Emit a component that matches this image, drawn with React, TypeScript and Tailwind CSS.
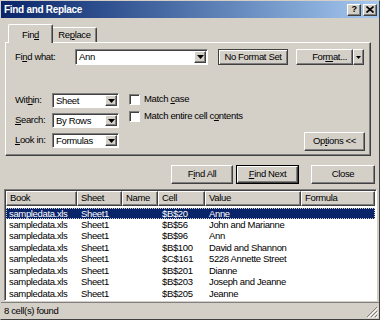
import React from 'react';

const raised =
  'border border-t-white border-l-white border-r-[#404040] border-b-[#404040] shadow-[inset_-1px_-1px_0_#808080]';
const sunken =
  'border border-t-[#808080] border-l-[#808080] border-r-white border-b-white shadow-[inset_1px_1px_0_#404040]';

function Arrow() {
  return (
    <svg width="7" height="4" viewBox="0 0 7 4">
      <path d="M0 0h7L3.5 4z" fill="#000" />
    </svg>
  );
}

function DropButton() {
  return (
    <div className={`w-[12px] h-full flex items-center justify-center bg-[#d4d0c8] ${raised}`}>
      <Arrow />
    </div>
  );
}

function Select({ value, width }: { value: string; width: string }) {
  return (
    <div className={`${width} h-[15px] bg-white flex items-stretch ${sunken} p-[1px]`}>
      <span className="flex-1 pl-[2px] leading-[11px]">{value}</span>
      <DropButton />
    </div>
  );
}

function Checkbox({ children }: { children: React.ReactNode }) {
  return (
    <div className="flex items-center h-[13px]">
      <div className={`w-[11px] h-[11px] bg-white ${sunken}`} />
      <span className="ml-[4px]">{children}</span>
    </div>
  );
}

const columns = [
  { name: 'Book', w: 'w-[71px]' },
  { name: 'Sheet', w: 'w-[45px]' },
  { name: 'Name', w: 'w-[36px]' },
  { name: 'Cell', w: 'w-[47px]' },
  { name: 'Value', w: 'w-[96px]' },
  { name: 'Formula', w: 'flex-1' },
];

const results = [
  ['$B$20', 'Anne'],
  ['$B$56', 'John and Marianne'],
  ['$B$96', 'Ann'],
  ['$B$100', 'David and Shannon'],
  ['$C$161', '5228 Annette Street'],
  ['$B$201', 'Dianne'],
  ['$B$203', 'Joseph and Jeanne'],
  ['$B$205', 'Jeanne'],
];

export default function App() {
  return (
    <div className="w-[380px] h-[320px] bg-[#d4d0c8] font-['Liberation_Sans',Arial,sans-serif] text-[9.5px] tracking-[-0.35px] text-black flex flex-col border border-t-[#d4d0c8] border-l-[#d4d0c8] border-r-[#404040] border-b-[#404040] overflow-hidden select-none">
      {/* title bar */}
      <div className="h-[17px] shrink-0 bg-linear-to-r from-[#0a246a] to-[#a6caf0] flex items-center pl-[3px] pr-[2px]">
        <span className="text-white font-bold text-[10px] tracking-[-0.3px]">Find and Replace</span>
        <div className="ml-auto flex gap-[2px]">
          <div className={`w-[14px] h-[12px] bg-[#d4d0c8] ${raised} flex items-center justify-center font-bold text-[9px] leading-none`}>?</div>
          <div className={`w-[14px] h-[12px] bg-[#d4d0c8] ${raised} flex items-center justify-center`}>
            <svg width="8" height="7" viewBox="0 0 8 7">
              <path d="M0.5 0.5l7 6M7.5 0.5l-7 6" stroke="#000" strokeWidth="1.6" />
            </svg>
          </div>
        </div>
      </div>

      {/* tabs */}
      <div className="mt-[6px] h-[18px] pl-[7px] flex items-end shrink-0">
        <div className="relative z-10 -mb-px w-[45px] h-[19px] bg-[#d4d0c8] border-t border-l border-t-white border-l-white rounded-tl-[2px] rounded-tr-[2px] border-r border-r-[#404040] shadow-[inset_-1px_0_0_#808080] flex items-start justify-center pt-[3px]">
          <span>
            Fin<span className="underline">d</span>
          </span>
        </div>
        <div className="w-[44px] h-[15px] bg-[#d4d0c8] border-t border-t-white rounded-tr-[2px] border-r border-r-[#404040] shadow-[inset_-1px_0_0_#808080] flex items-center justify-center">
          <span>
            Re<span className="underline">p</span>lace
          </span>
        </div>
      </div>

      {/* panel */}
      <div className={`ml-[4px] w-[366px] h-[114px] shrink-0 ${raised}`}>
        <div className="mt-[6px] pl-[9px] flex items-center h-[16px]">
          <span className="w-[60px]">
            Fi<span className="underline">n</span>d what:
          </span>
          <div className={`w-[133px] h-[16px] bg-white flex items-stretch ${sunken} p-[1px]`}>
            <span className="flex-1 pl-[2px] leading-[12px]">Ann</span>
            <DropButton />
          </div>
          <div className="ml-[10px] w-[70px] h-[16px] border border-[#404040] shadow-[inset_1px_1px_0_white,inset_-1px_-1px_0_#808080] flex items-center justify-center">
            No Format Set
          </div>
          <div className={`ml-[8px] w-[57px] h-[16px] ${raised} flex items-center justify-end pr-[5px]`}>
            <span>
              For<span className="underline">m</span>at...
            </span>
          </div>
          <div className={`w-[11px] h-[16px] ${raised} flex items-center justify-center`}>
            <svg width="5" height="3" viewBox="0 0 5 3">
              <path d="M0 0h5L2.5 3z" fill="#000" />
            </svg>
          </div>
        </div>

        <div className="mt-[28px] pl-[9px] flex items-start">
          <div className="flex flex-col gap-[5px]">
            <div className="flex items-center">
              <span className="w-[37px]">
                Wit<span className="underline">h</span>in:
              </span>
              <Select value="Sheet" width="w-[67px]" />
            </div>
            <div className="flex items-center">
              <span className="w-[37px]">
                <span className="underline">S</span>earch:
              </span>
              <Select value="By Rows" width="w-[67px]" />
            </div>
            <div className="flex items-center">
              <span className="w-[37px]">
                <span className="underline">L</span>ook in:
              </span>
              <Select value="Formulas" width="w-[67px]" />
            </div>
          </div>
          <div className="ml-[10px] flex flex-col gap-[4px]">
            <Checkbox>
              Match <span className="underline">c</span>ase
            </Checkbox>
            <Checkbox>
              Match entire cell c<span className="underline">o</span>ntents
            </Checkbox>
          </div>
          <div className={`ml-auto mr-[5px] mt-[39px] w-[61px] h-[19px] ${raised} flex items-center justify-center`}>
            <span>
              Op<span className="underline">t</span>ions &lt;&lt;
            </span>
          </div>
        </div>
      </div>

      {/* action buttons */}
      <div className="mt-[9px] h-[19px] pr-[4px] flex justify-end shrink-0">
        <div className={`w-[62px] h-full ${raised} flex items-center justify-center`}>
          <span>
            F<span className="underline">i</span>nd All
          </span>
        </div>
        <div className="ml-[3px] w-[63px] h-full border border-black">
          <div className={`w-full h-full ${raised} flex items-center justify-center`}>
            <span>
              <span className="underline">F</span>ind Next
            </span>
          </div>
        </div>
        <div className={`ml-[12px] w-[64px] h-full ${raised} flex items-center justify-center`}>Close</div>
      </div>

      {/* results list */}
      <div className={`mt-[5px] ml-[3px] w-[373px] h-[112px] shrink-0 bg-white ${sunken} p-[1px] flex flex-col`}>
        <div className="flex h-[15px] shrink-0">
          {columns.map((c) => (
            <div
              key={c.name}
              className={`${c.w} h-full bg-[#d4d0c8] ${raised} flex items-center pl-[3px]`}
            >
              {c.name}
            </div>
          ))}
        </div>
        <div className="mt-[2px] flex flex-col">
          {results.map(([cell, value], i) => (
            <div
              key={cell}
              className={`flex h-[11.45px] items-center ${
                i === 0
                  ? 'bg-[#0a246a] text-white outline-1 outline-dotted outline-[#d4d0c8] -outline-offset-1'
                  : ''
              }`}
            >
              <span className="w-[71px] pl-[3px]">sampledata.xls</span>
              <span className="w-[45px] pl-[4px]">Sheet1</span>
              <span className="w-[36px]" />
              <span className="w-[47px] pl-[4px]">{cell}</span>
              <span className="flex-1 pl-[4px]">{value}</span>
            </div>
          ))}
        </div>
      </div>

      {/* status bar */}
      <div className="flex-1 flex items-center pl-[3px] relative border-t border-t-[#808080] mt-[1px]">
        <span>8 cell(s) found</span>
        <svg className="absolute right-[1px] bottom-[1px]" width="12" height="12" viewBox="0 0 12 12">
          <path d="M11 1L1 11M11 5L5 11M11 9L9 11" stroke="#808080" strokeWidth="1" />
          <path d="M12 2L2 12M12 6L6 12M12 10L10 12" stroke="#ffffff" strokeWidth="1" />
        </svg>
      </div>
    </div>
  );
}
